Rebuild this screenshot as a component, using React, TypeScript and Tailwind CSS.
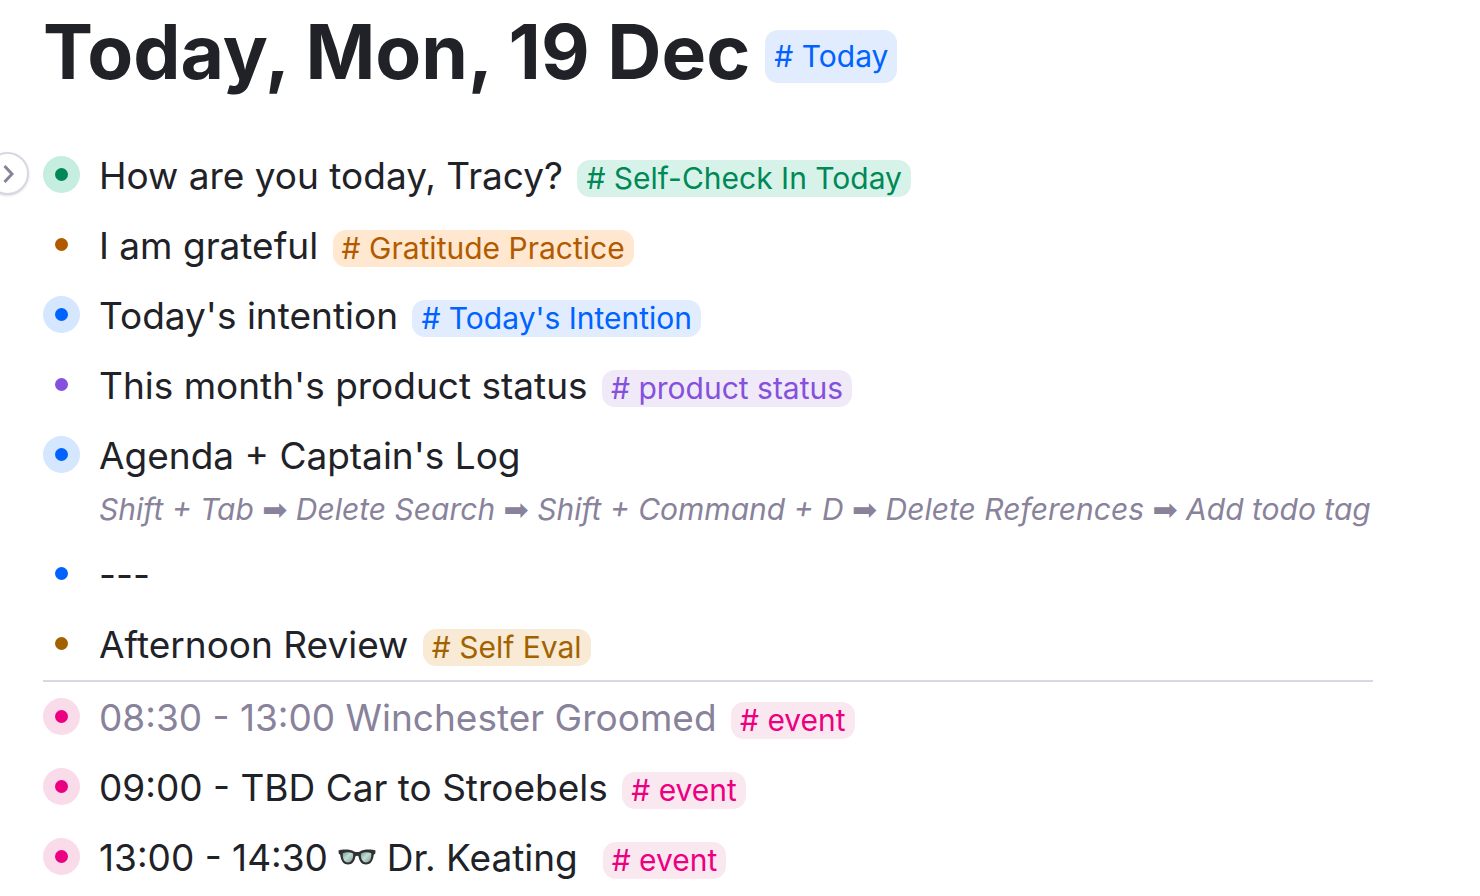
import React from 'react'
import clsx from 'clsx'

type Color = 'green' | 'orange' | 'blue' | 'purple' | 'amber' | 'pink'

type Item = {
  id: string
  title: React.ReactNode
  color: Color
  tag?: string
  filled?: boolean
  muted?: boolean
  expandable?: boolean
  description?: string[]
}

const DOT: Record<Color, string> = {
  green: 'bg-[#008856]',
  orange: 'bg-[#b25a00]',
  blue: 'bg-[#0062ff]',
  purple: 'bg-[#8550de]',
  amber: 'bg-[#a36200]',
  pink: 'bg-[#ec0081]',
}

const HALO: Record<Color, string> = {
  green: 'bg-[#c5eee0]',
  orange: 'bg-[#ffe0c0]',
  blue: 'bg-[#d5e6ff]',
  purple: 'bg-[#e6dcf7]',
  amber: 'bg-[#f5e2c4]',
  pink: 'bg-[#f9dbe9]',
}

const TAG: Record<Color, string> = {
  green: 'bg-[#d7f3e9] text-[#008856]',
  orange: 'bg-[#ffe8cf] text-[#b25a00]',
  blue: 'bg-[#e1ecff] text-[#0062ff]',
  purple: 'bg-[#f0e9f8] text-[#8550de]',
  amber: 'bg-[#f8ead5] text-[#a36200]',
  pink: 'bg-[#fae8f1] text-[#ec0081]',
}

const NOTES: Item[] = [
  { id: 'n1', title: 'How are you today, Tracy?', color: 'green', tag: 'Self-Check In Today', filled: true, expandable: true },
  { id: 'n2', title: 'I am grateful', color: 'orange', tag: 'Gratitude Practice' },
  { id: 'n3', title: "Today's intention", color: 'blue', tag: "Today's Intention", filled: true },
  { id: 'n4', title: "This month's product status", color: 'purple', tag: 'product status' },
  {
    id: 'n5',
    title: "Agenda + Captain's Log",
    color: 'blue',
    filled: true,
    description: ['Shift + Tab', 'Delete Search', 'Shift + Command + D', 'Delete References', 'Add todo tag'],
  },
  { id: 'n6', title: '---', color: 'blue' },
  { id: 'n7', title: 'Afternoon Review', color: 'amber', tag: 'Self Eval' },
]

const EVENTS: Item[] = [
  { id: 'e1', title: '08:30 - 13:00 Winchester Groomed', color: 'pink', tag: 'event', filled: true, muted: true },
  { id: 'e2', title: '09:00 - TBD Car to Stroebels', color: 'pink', tag: 'event', filled: true },
  { id: 'e3', title: <>13:00 - 14:30 <Glasses /> Dr. Keating&nbsp;</>, color: 'pink', tag: 'event', filled: true },
]

function Glasses() {
  return (
    <svg role="img" aria-label="glasses" viewBox="0 0 38 16" className="mb-1.5 inline-block h-4 w-[38px] align-baseline">
      <defs>
        <linearGradient id="lens" x1="0" y1="0" x2="1" y2="1">
          <stop offset="0" stopColor="#7f9b95" />
          <stop offset="0.45" stopColor="#bfe0d6" />
          <stop offset="1" stopColor="#87928f" />
        </linearGradient>
      </defs>
      <path
        d="M0.500 1.500C5 0 13 0.300 16 2.500Q19 3.600 22 2.500C25 0.300 33 0 37.500 1.500L37.300 4.500L35.800 5.800C35 11.500 33 15.500 28 15.500C23.500 15.500 21.300 12 20.600 7.500Q19 5.800 17.400 7.500C16.700 12 14.500 15.500 10 15.500C5 15.500 3 11.500 2.200 5.800L0.700 4.500Z"
        fill="#303234"
      />
      <path d="M4.800 4.200C8 3 12 3 15 4.500C15.800 9 13.500 13.500 10 13.500C6.300 13.500 4.300 9.500 4.800 4.200Z" fill="url(#lens)" />
      <path d="M33.200 4.200C30 3 26 3 23 4.500C22.200 9 24.500 13.500 28 13.500C31.700 13.500 33.700 9.500 33.200 4.200Z" fill="url(#lens)" />
    </svg>
  )
}

function Tag({ color, label, large }: { color: Color; label: string; large?: boolean }) {
  return (
    <a
      href="#"
      className={clsx(
        'inline-block rounded-[13px] px-[9px] text-[30px] whitespace-nowrap',
        large ? 'leading-[53px]' : 'ml-1 leading-[37px]',
        TAG[color],
      )}
    >
      # {label}
    </a>
  )
}

function Row({ item }: { item: Item }) {
  return (
    <li className="relative flex items-start gap-[19px] py-3">
      {item.expandable && (
        <button
          type="button"
          aria-label="Expand"
          className="absolute top-[11px] -left-[57px] flex size-[43px] items-center justify-center rounded-full border-2 border-[#d9d7e3] bg-white text-[#88829b] shadow-sm"
        >
          <svg viewBox="0 0 12 18" className="h-[18px] w-3" fill="none" stroke="currentColor" strokeWidth="3">
            <path d="M2.500 1L10 9L2.500 17" />
          </svg>
        </button>
      )}
      <button
        type="button"
        aria-label="Open node"
        className={clsx(
          'mt-[3px] flex size-[37px] shrink-0 items-center justify-center rounded-full',
          item.filled && HALO[item.color],
        )}
      >
        <span className={clsx('size-[13px] rounded-full', DOT[item.color])} />
      </button>
      <div className="min-w-0">
        <p className={clsx('text-[37px] leading-[46px]', item.muted && 'text-[#88829b]')}>
          {item.title} {item.tag && <Tag color={item.color} label={item.tag} />}
        </p>
        {item.description && (
          <p className="mt-3 text-[30px] leading-[37px] text-[#88829b] italic">
            {item.description.map((step, i) => (
              <React.Fragment key={step}>
                {i > 0 && ' ➡\uFE0E '}
                {step}
              </React.Fragment>
            ))}
          </p>
        )}
      </div>
    </li>
  )
}

export default function App() {
  return (
    <main className="overflow-x-hidden bg-white pt-5 pr-[107px] pl-[43px] font-['Inter','DejaVu_Sans',sans-serif] text-[#212228] [font-optical-sizing:none]">
      <header className="flex items-end gap-[15px]">
        <h1 className="text-[75px] leading-[63px] font-bold">Today, Mon, 19 Dec</h1>
        <Tag color="blue" label="Today" large />
      </header>

      <ul className="mt-[58px]">
        {NOTES.map(item => <Row key={item.id} item={item} />)}
      </ul>

      <ul className="border-t-2 border-[#d9d7e5] pt-px">
        {EVENTS.map(item => <Row key={item.id} item={item} />)}
      </ul>
    </main>
  )
}
